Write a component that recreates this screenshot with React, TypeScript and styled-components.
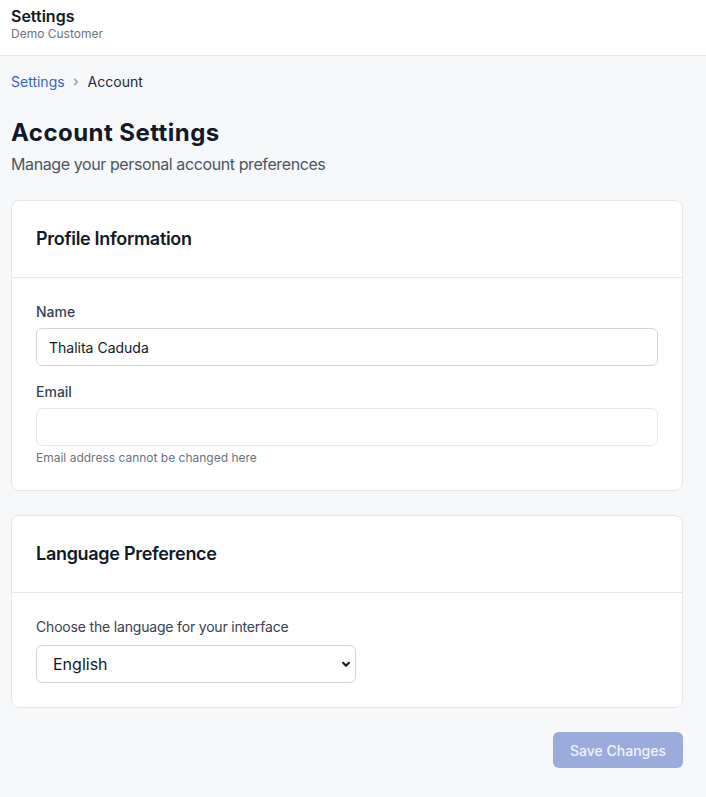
import React from "react";
import styled, { createGlobalStyle } from "styled-components";

const Global = createGlobalStyle`
  html, body { margin: 0; padding: 0; background: #f7f8fa; }
  body { font-family: Inter, "Noto Sans", "Liberation Sans", sans-serif; color: #111827; -webkit-font-smoothing: antialiased; }
  * { box-sizing: border-box; }
`;

const Page = styled.div`
  min-height: 797px;
  background: #f7f8fa;
`;

const TopBar = styled.header`
  height: 56px;
  background: #ffffff;
  border-bottom: 1px solid #e5e7eb;
  padding: 7px 11px 0;
  display: flex;
  flex-direction: column;
`;

const TopTitle = styled.div`
  font-size: 16px;
  line-height: 19px;
  font-weight: 600;
  color: #111827;
`;

const TopSub = styled.div`
  font-size: 12px;
  line-height: 15px;
  color: #6b7280;
`;

const Main = styled.main`
  padding: 16px 23px 24px 11px;
  display: flex;
  flex-direction: column;
`;

const Crumbs = styled.nav`
  display: flex;
  align-items: center;
  font-size: 14px;
  line-height: 20px;
`;

const CrumbLink = styled.a`
  color: #3d60c0;
  text-decoration: none;
`;

const CrumbSep = styled.svg`
  margin: 0 4px 0 3px;
`;

const CrumbCurrent = styled.span`
  color: #1f2937;
`;

const Title = styled.h1`
  margin: 25px 0 3px;
  font-size: 24px;
  line-height: 32px;
  font-weight: 700;
  letter-spacing: 0.45px;
  color: #111827;
`;

const Subtitle = styled.p`
  margin: 0 0 24px;
  font-size: 16px;
  line-height: 24px;
  letter-spacing: -0.4px;
  color: #4b5563;
`;

const Card = styled.section`
  background: #ffffff;
  border: 1px solid #e5e7eb;
  border-radius: 8px;
  margin-bottom: 24px;
`;

const CardHeader = styled.div`
  padding: 24px;
  border-bottom: 1px solid #e5e7eb;
`;

const CardTitle = styled.h2`
  margin: 0;
  font-size: 18px;
  line-height: 28px;
  font-weight: 600;
  letter-spacing: -0.3px;
  color: #111827;
`;

const CardBody = styled.div`
  padding: 24px;
  display: flex;
  flex-direction: column;
`;

const Field = styled.div<{ $spaced?: boolean }>`
  display: flex;
  flex-direction: column;
  margin-top: ${(p) => (p.$spaced ? "16px" : "0")};
`;

const Label = styled.label<{ $gap?: number }>`
  font-size: 14px;
  line-height: 20px;
  font-weight: 500;
  color: #374151;
  margin-bottom: ${(p) => p.$gap ?? 6}px;
`;

const PlainLabel = styled(Label)`
  font-weight: 400;
  letter-spacing: -0.18px;
`;

const Input = styled.input`
  height: 38px;
  width: 100%;
  padding: 8px 12px;
  border: 1px solid #d1d5db;
  border-radius: 6px;
  font-family: inherit;
  font-size: 14px;
  color: #111827;
  background: #ffffff;
  outline: none;
`;

const MutedInput = styled(Input)`
  border-color: #e5e7eb;
`;

const Help = styled.p`
  margin: 4px 0 0;
  font-size: 12px;
  line-height: 16px;
  color: #6b7280;
`;

const SelectWrap = styled.div`
  position: relative;
  width: 320px;
`;

const Select = styled.select`
  appearance: none;
  -webkit-appearance: none;
  width: 100%;
  height: 38px;
  padding: 0 28px 0 16px;
  border: 1px solid #d1d5db;
  border-radius: 6px;
  background: #ffffff;
  font-family: inherit;
  font-size: 16px;
  color: #111827;
  outline: none;
`;

const Chevron = styled.svg`
  position: absolute;
  right: 3px;
  top: 50%;
  transform: translateY(-50%);
  pointer-events: none;
`;

const Actions = styled.div`
  display: flex;
  justify-content: flex-end;
`;

const SaveButton = styled.button`
  height: 36px;
  padding: 0 17px;
  border: none;
  border-radius: 6px;
  background: #9aacdb;
  color: #f1f3fa;
  font-family: inherit;
  font-size: 14px;
  font-weight: 500;
  cursor: not-allowed;
`;

export default function App() {
  return (
    <Page>
      <Global />
      <TopBar>
        <TopTitle>Settings</TopTitle>
        <TopSub>Demo Customer</TopSub>
      </TopBar>
      <Main>
        <Crumbs>
          <CrumbLink href="#">Settings</CrumbLink>
          <CrumbSep width="16" height="16" viewBox="0 0 24 24" fill="none" stroke="#9ca3af" strokeWidth="2.5" strokeLinecap="round" strokeLinejoin="round">
            <path d="M10 8l4 4-4 4" />
          </CrumbSep>
          <CrumbCurrent>Account</CrumbCurrent>
        </Crumbs>
        <Title>Account Settings</Title>
        <Subtitle>Manage your personal account preferences</Subtitle>

        <Card>
          <CardHeader>
            <CardTitle>Profile Information</CardTitle>
          </CardHeader>
          <CardBody>
            <Field>
              <Label>Name</Label>
              <Input defaultValue="Thalita Caduda" />
            </Field>
            <Field $spaced>
              <Label>Email</Label>
              <MutedInput disabled defaultValue="" />
              <Help>Email address cannot be changed here</Help>
            </Field>
          </CardBody>
        </Card>

        <Card>
          <CardHeader>
            <CardTitle>Language Preference</CardTitle>
          </CardHeader>
          <CardBody>
            <Field>
              <PlainLabel $gap={8}>Choose the language for your interface</PlainLabel>
              <SelectWrap>
                <Select defaultValue="en">
                  <option value="en">English</option>
                  <option value="pt">Português</option>
                  <option value="es">Español</option>
                </Select>
                <Chevron width="14" height="14" viewBox="0 0 24 24" fill="none" stroke="#111827" strokeWidth="3.5" strokeLinecap="round" strokeLinejoin="round">
                  <path d="M7 10l5 5 5-5" />
                </Chevron>
              </SelectWrap>
            </Field>
          </CardBody>
        </Card>

        <Actions>
          <SaveButton disabled>Save Changes</SaveButton>
        </Actions>
      </Main>
    </Page>
  );
}
